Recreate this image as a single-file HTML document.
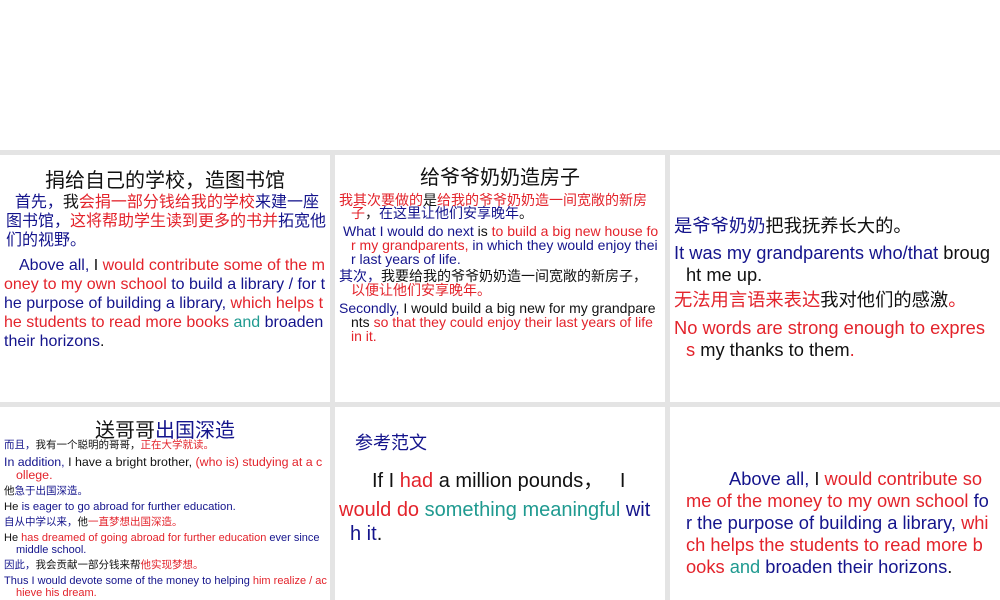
<!DOCTYPE html>
<html><head><meta charset="utf-8"><style>
body{margin:0;width:1000px;height:600px;background:#fff;position:relative;overflow:hidden;font-family:"Liberation Sans","Noto Sans CJK SC",sans-serif;}
.bg{position:absolute;left:0;top:150px;width:1000px;height:450px;background:#e4e4e4;}
.p{position:absolute;background:#fff;}
.l{position:absolute;white-space:nowrap;}
.b{color:#14148c}.r{color:#e3232b}.g{color:#1f9a90}.k{color:#111}
</style></head><body>
<div class="bg"></div>
<div class="p" style="left:0;top:155px;width:330px;height:247px"></div>
<div class="p" style="left:335px;top:155px;width:330px;height:247px"></div>
<div class="p" style="left:670px;top:155px;width:330px;height:247px"></div>
<div class="p" style="left:0;top:407px;width:330px;height:193px"></div>
<div class="p" style="left:335px;top:407px;width:330px;height:193px"></div>
<div class="p" style="left:670px;top:407px;width:330px;height:193px"></div>

<!-- panel 1 -->
<div class="l k" style="left:45px;top:164px;font-size:20px">捐给自己的学校，造图书馆</div>
<div style="font-size:16px;line-height:19px">
<div class="l" style="left:6px;top:193px"><span class="b">&nbsp;&nbsp;首先，</span><span class="k">我</span><span class="r">会捐一部分钱给我的学校</span><span class="b">来建一座</span></div>
<div class="l" style="left:6px;top:212px"><span class="b">图书馆，</span><span class="r">这将帮助学生读到更多的书并</span><span class="b">拓宽他</span></div>
<div class="l b" style="left:6px;top:231px">们的视野。</div>
</div>
<div style="font-size:16px;line-height:19px">
<div class="l" style="left:19px;top:256px"><span class="b">Above all, </span><span class="k">I </span><span class="r">would contribute some of the m</span></div>
<div class="l" style="left:4px;top:275px"><span class="r">oney to my own school </span><span class="b">to build a library / for t</span></div>
<div class="l" style="left:4px;top:294px"><span class="b">he purpose of building a library, </span><span class="r">which helps t</span></div>
<div class="l" style="left:4px;top:313px"><span class="r">he students to read more books </span><span class="g">and </span><span class="b">broaden</span></div>
<div class="l b" style="left:4px;top:332px">their horizons<span class="k">.</span></div>
</div>

<!-- panel 2 -->
<div class="l k" style="left:420px;top:161px;font-size:20px">给爷爷奶奶造房子</div>
<div style="font-size:14px;line-height:14px">
<div class="l" style="left:339px;top:193px"><span class="r">我其次要做的</span><span class="k">是</span><span class="r">给我的爷爷奶奶造一间宽敞的新房</span></div>
<div class="l" style="left:351px;top:206px"><span class="r">子</span><span class="k">，</span><span class="b">在这里让他们安享晚年</span><span class="k">。</span></div>
<div class="l" style="left:343px;top:224px"><span class="b">What I would do next </span><span class="k">is </span><span class="r">to build a big new house fo</span></div>
<div class="l" style="left:351px;top:238px"><span class="r">r my grandparents, </span><span class="b">in which they would enjoy thei</span></div>
<div class="l b" style="left:351px;top:252px">r last years of life.</div>
<div class="l" style="left:339px;top:269px"><span class="b">其次，</span><span class="k">我要给我的爷爷奶奶造一间宽敞的新房子，</span></div>
<div class="l r" style="left:351px;top:283px">以便让他们安享晚年。</div>
<div class="l" style="left:339px;top:301px"><span class="b">Secondly, </span><span class="k">I would build a big new for my grandpare</span></div>
<div class="l" style="left:351px;top:315px"><span class="k">nts </span><span class="r">so that they could enjoy their last years of life</span></div>
<div class="l r" style="left:351px;top:329px">in it.</div>
</div>

<!-- panel 3 -->
<div style="font-size:18.3px;line-height:22px">
<div class="l" style="left:674px;top:215px"><span class="b">是爷爷奶奶</span><span class="k">把我抚养长大的。</span></div>
<div class="l" style="left:674px;top:242px"><span class="b">It was my grandparents who/that </span><span class="k">broug</span></div>
<div class="l k" style="left:686px;top:264px">ht me up.</div>
<div class="l" style="left:674px;top:289px"><span class="r">无法用言语来表达</span><span class="k">我对他们的感激</span><span class="r">。</span></div>
<div class="l" style="left:674px;top:317px"><span class="r">No words are strong enough to expres</span></div>
<div class="l" style="left:686px;top:339px"><span class="r">s </span><span class="k">my thanks to them</span><span class="r">.</span></div>
</div>

<!-- panel 4 -->
<div class="l" style="left:95px;top:414px;font-size:20px"><span class="k">送哥哥</span><span class="b">出国深造</span></div>
<div style="font-size:12.4px;line-height:13px">
<div class="l" style="left:4px;top:439px;font-size:10.5px"><span class="b">而且，</span><span class="k">我有一个聪明的哥哥，</span><span class="r">正在大学就读。</span></div>
<div class="l" style="left:4px;top:456px"><span class="b">In addition, </span><span class="k">I have a bright brother, </span><span class="r">(who is) studying at a c</span></div>
<div class="l r" style="left:16px;top:469px">ollege.</div>
<div class="l" style="left:4px;top:485px;font-size:10.5px"><span class="k">他</span><span class="b">急于出国深造。</span></div>
<div class="l" style="left:4px;top:501px;font-size:11.3px"><span class="k">He </span><span class="b">is eager to go abroad for further education.</span></div>
<div class="l" style="left:4px;top:516px;font-size:10.5px"><span class="b">自从中学以来，</span><span class="k">他</span><span class="r">一直梦想出国深造。</span></div>
<div class="l" style="left:4px;top:532px;font-size:11px"><span class="k">He </span><span class="r">has dreamed of going abroad for further education </span><span class="b">ever since</span></div>
<div class="l b" style="left:16px;top:544px;font-size:11px">middle school.</div>
<div class="l" style="left:4px;top:559px;font-size:10.5px"><span class="b">因此，</span><span class="k">我会贡献一部分钱来帮</span><span class="r">他实现梦想。</span></div>
<div class="l" style="left:4px;top:575px;font-size:11px"><span class="b">Thus I would devote some of the money to helping </span><span class="r">him realize / ac</span></div>
<div class="l r" style="left:16px;top:587px;font-size:11px">hieve his dream.</div>
</div>

<!-- panel 5 -->
<div class="l b" style="left:355px;top:429px;font-size:18px">参考范文</div>
<div style="font-size:20px;line-height:24px">
<div class="l" style="left:372px;top:469px"><span class="k">If I </span><span class="r">had</span><span class="k"> a million pounds，&nbsp;&nbsp;&nbsp;I</span></div>
<div class="l" style="left:339px;top:498px"><span class="r">would do </span><span class="g">something meaningful </span><span class="b">wit</span></div>
<div class="l" style="left:350px;top:522px"><span class="b">h it</span><span class="k">.</span></div>
</div>

<!-- panel 6 -->
<div style="font-size:18.3px;line-height:22px">
<div class="l" style="left:729px;top:468px"><span class="b">Above all, </span><span class="k">I </span><span class="r">would contribute so</span></div>
<div class="l" style="left:686px;top:490px"><span class="r">me of the money to my own school </span><span class="b">fo</span></div>
<div class="l" style="left:686px;top:512px"><span class="b">r the purpose of building a library, </span><span class="r">whi</span></div>
<div class="l r" style="left:686px;top:534px">ch helps the students to read more b</div>
<div class="l" style="left:686px;top:556px"><span class="r">ooks </span><span class="g">and </span><span class="b">broaden their horizons</span><span class="k">.</span></div>
</div>
</body></html>
